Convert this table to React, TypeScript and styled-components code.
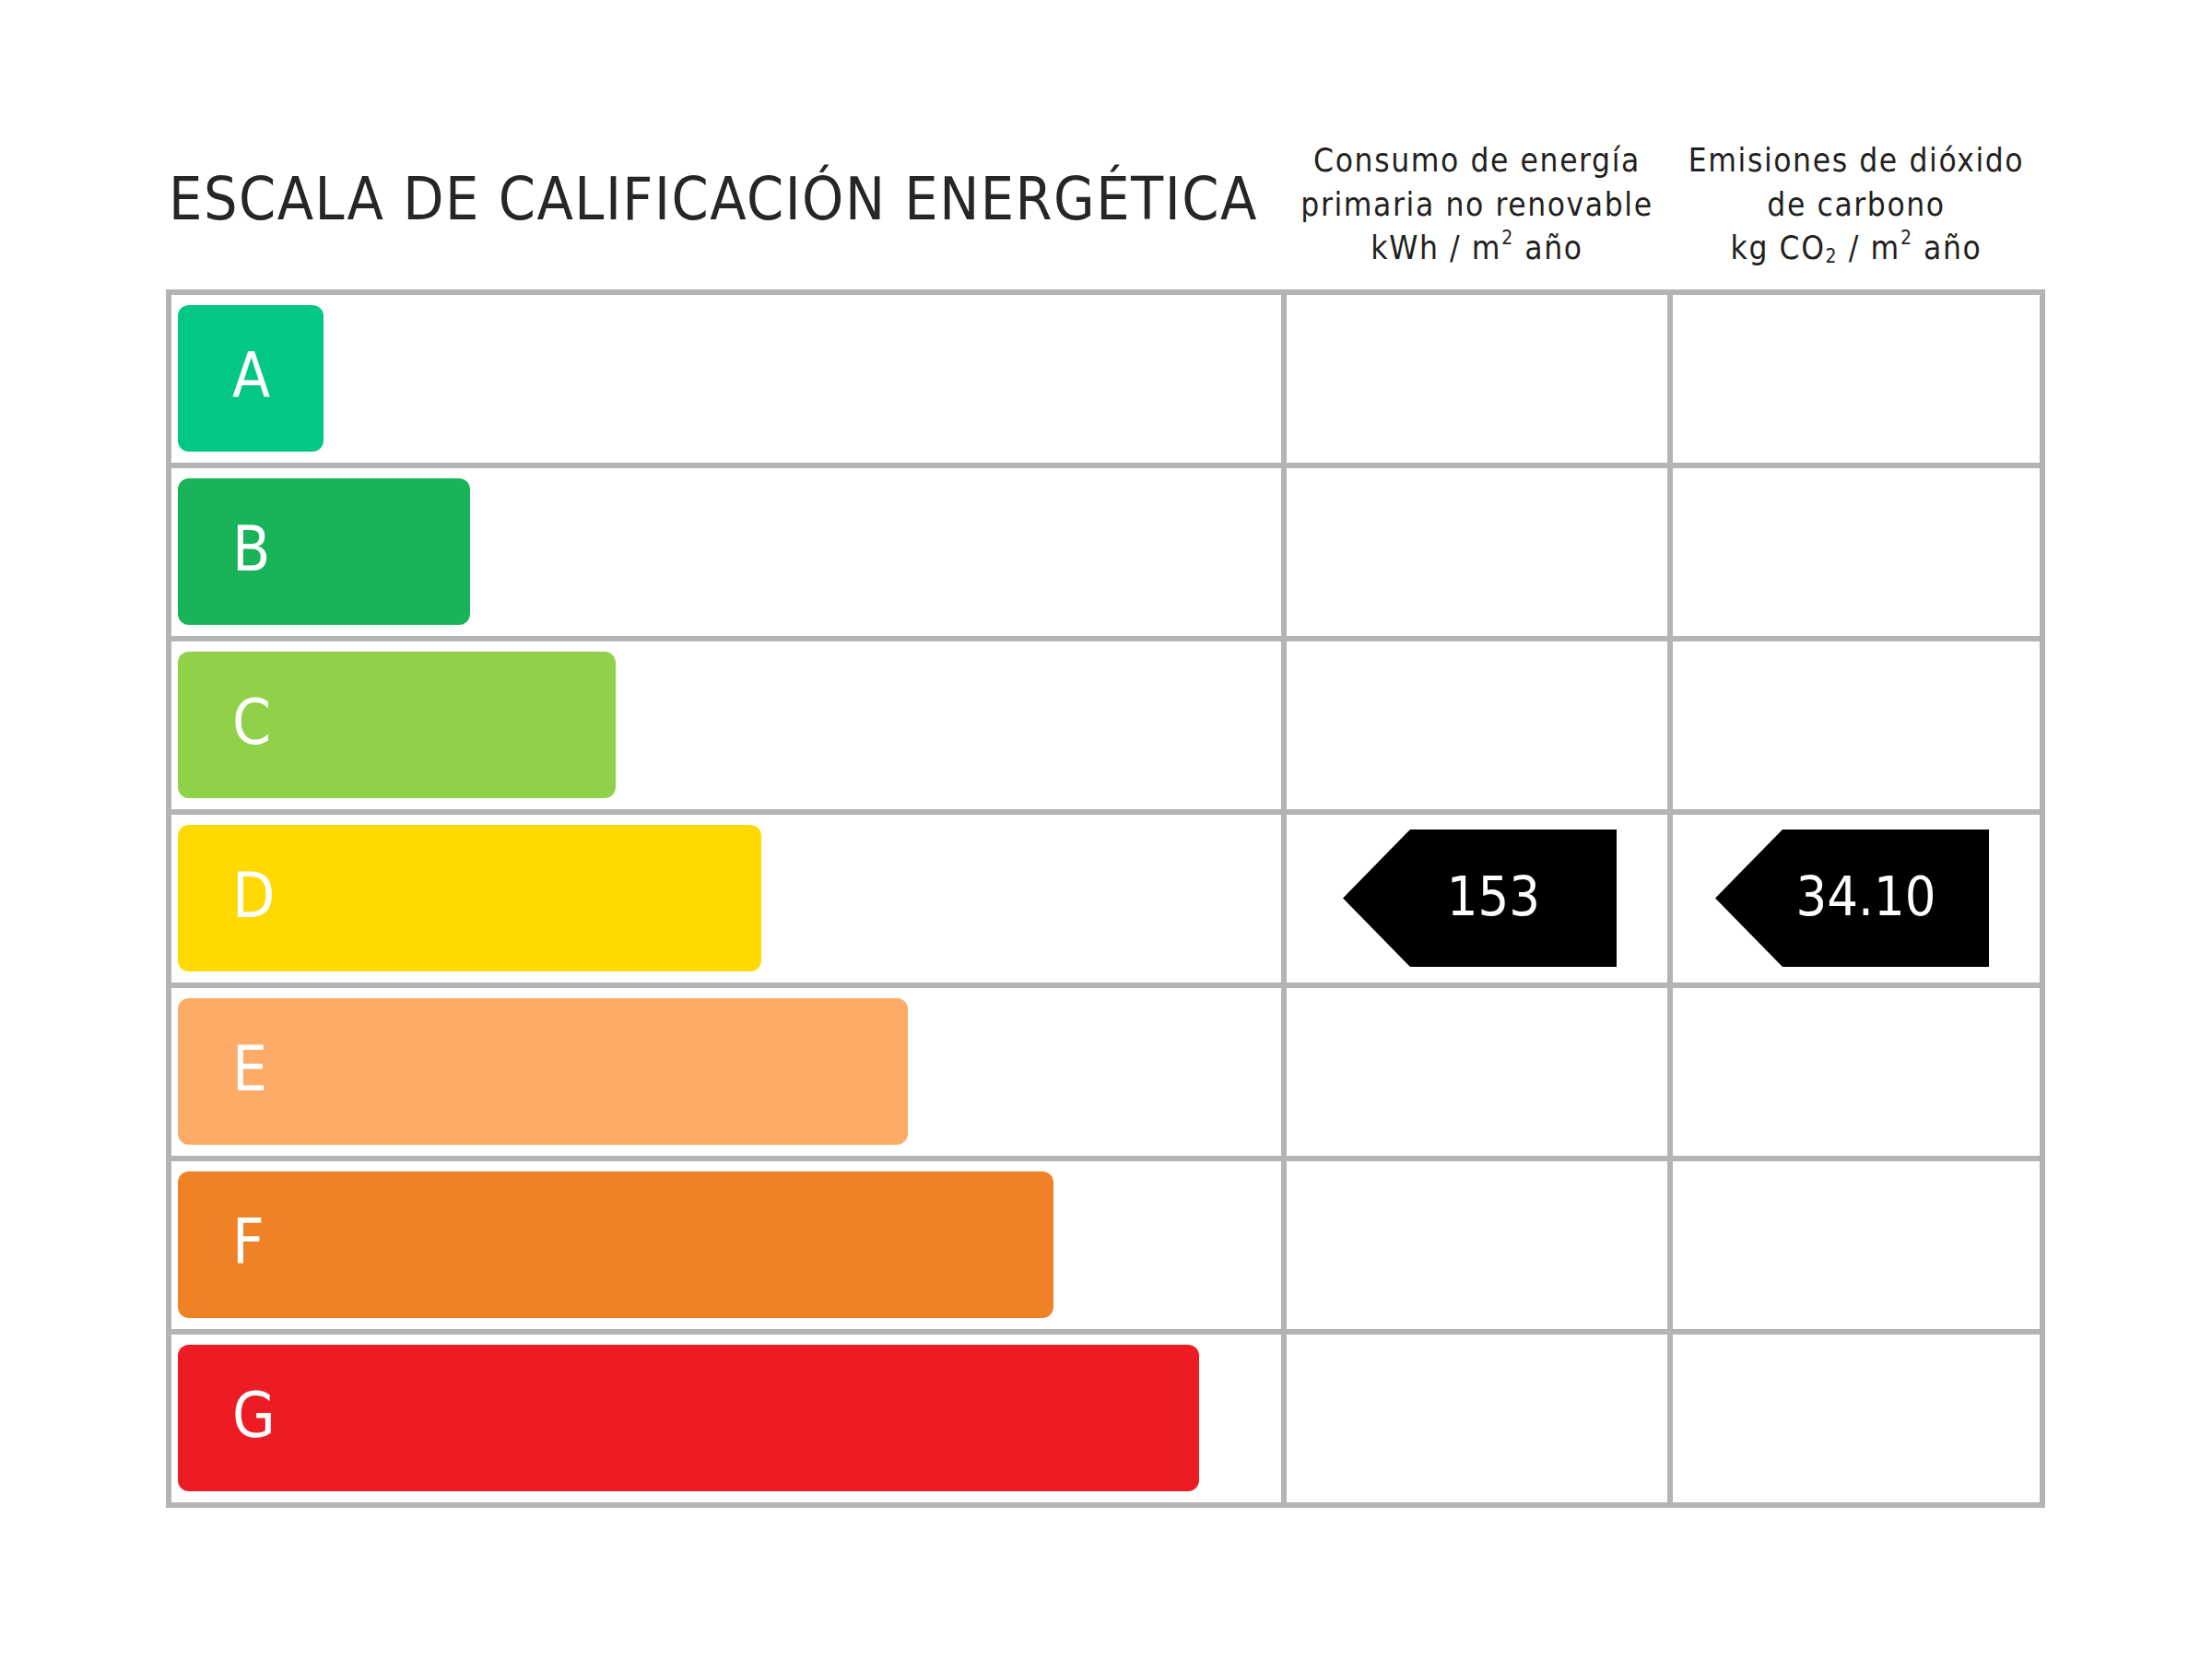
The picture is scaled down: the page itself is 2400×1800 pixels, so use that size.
import styled, { createGlobalStyle } from 'styled-components';

const GlobalStyle = createGlobalStyle`
    body {
        margin: 0;
        background: #ffffff;
    }
`;

const FONT = `"DejaVu Sans Condensed", "Liberation Sans Narrow", "DejaVu Sans", sans-serif`;

const COLUMNS = '1204px 413px 398px';

const Page = styled.div`
    padding: 151px 0 0 180px;
    font-family: ${FONT};
    font-stretch: condensed;
`;

const Header = styled.div`
    display: grid;
    grid-template-columns: ${COLUMNS};
    column-gap: 6px;
    padding: 0 6px;
    margin-bottom: 20px;
    align-items: end;
    width: fit-content;
`;

const Title = styled.h1`
    margin: 0 0 39px -3px;
    font-size: 64px;
    font-weight: 400;
    line-height: 1.2;
    letter-spacing: 1.5px;
    color: #262626;
    white-space: nowrap;
`;

const ColumnHead = styled.div`
    text-align: center;
    font-size: 35px;
    line-height: 47.5px;
    letter-spacing: 1.6px;
    color: #231f20;
    white-space: nowrap;
`;

const Sup = styled.sup`
    font-size: 0.6em;
    line-height: 0;
    vertical-align: 0.75em;
`;

const Sub = styled.sub`
    font-size: 0.6em;
    line-height: 0;
    vertical-align: -0.2em;
`;

const Table = styled.div`
    display: grid;
    grid-template-columns: ${COLUMNS};
    grid-auto-rows: 182px;
    gap: 6px;
    padding: 6px;
    background: #b4b4b4;
    width: fit-content;
`;

const Cell = styled.div`
    background: #ffffff;
    display: flex;
    align-items: center;
`;

const ScaleCell = styled(Cell)`
    padding-left: 7px;
`;

const ValueCell = styled(Cell)`
    justify-content: flex-end;
    padding-right: 55px;
`;

interface BarProps {
    $color: string;
    $width: number;
}

const Bar = styled.div<BarProps>`
    box-sizing: border-box;
    width: ${props => props.$width}px;
    height: 159px;
    border-radius: 12px;
    background: ${props => props.$color};
    display: flex;
    align-items: center;
    padding: 0 0 6px 59px;
    color: #ffffff;
    font-size: 67px;
`;

const Badge = styled.div`
    box-sizing: border-box;
    width: 297px;
    height: 149px;
    background: #000000;
    clip-path: polygon(73px 0, 100% 0, 100% 100%, 73px 100%, 0 50%);
    display: flex;
    align-items: center;
    justify-content: center;
    padding: 0 0 4px 30px;
    color: #ffffff;
    font-size: 59px;
`;

const levels = [
    { letter: 'A', color: '#02c883' },
    { letter: 'B', color: '#19b35a' },
    { letter: 'C', color: '#91d14a' },
    { letter: 'D', color: '#ffd900' },
    { letter: 'E', color: '#fdab67' },
    { letter: 'F', color: '#ef8226' },
    { letter: 'G', color: '#ed1c24' },
];

// the building's rating sits on this row
const rating = { letter: 'D', energy: '153', emissions: '34.10' };

export default function App() {
    return (
        <Page>
            <GlobalStyle />
            <Header>
                <Title>ESCALA DE CALIFICACIÓN ENERGÉTICA</Title>
                <ColumnHead>
                    Consumo de energía<br />
                    primaria no renovable<br />
                    kWh / m<Sup>2</Sup> año
                </ColumnHead>
                <ColumnHead>
                    Emisiones de dióxido<br />
                    de carbono<br />
                    kg CO<Sub>2</Sub> / m<Sup>2</Sup> año
                </ColumnHead>
            </Header>
            <Table>
                {levels.map((level, index) => {
                    const rated = level.letter === rating.letter;
                    return [
                        <ScaleCell key={level.letter + '-bar'}>
                            <Bar $color={level.color} $width={Math.round(158.3 * (index + 1))}>
                                {level.letter}
                            </Bar>
                        </ScaleCell>,
                        <ValueCell key={level.letter + '-energy'}>
                            {rated && <Badge>{rating.energy}</Badge>}
                        </ValueCell>,
                        <ValueCell key={level.letter + '-co2'}>
                            {rated && <Badge>{rating.emissions}</Badge>}
                        </ValueCell>,
                    ];
                })}
            </Table>
        </Page>
    );
}
